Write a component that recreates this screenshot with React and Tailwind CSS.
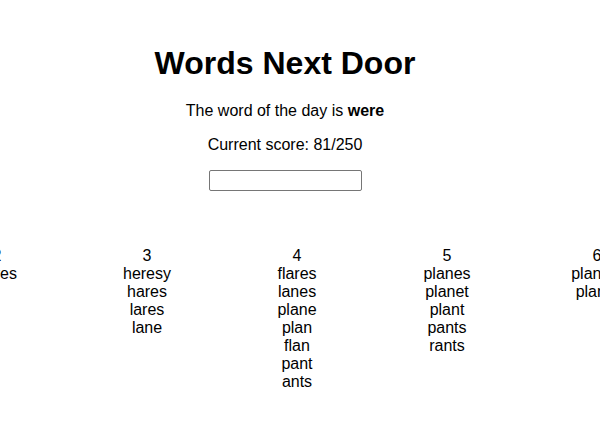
const columns = [
  { n: 2, words: ['heres'] },
  { n: 3, words: ['heresy', 'hares', 'lares', 'lane'] },
  { n: 4, words: ['flares', 'lanes', 'plane', 'plan', 'flan', 'pant', 'ants'] },
  { n: 5, words: ['planes', 'planet', 'plant', 'pants', 'rants'] },
  { n: 6, words: ['planets', 'plants'] },
]

function WordColumn({ n, words }) {
  return (
    <div className="w-[150px] shrink-0 flex flex-col items-center text-center">
      <div>{n}</div>
      {words.map((w) => (
        <div key={w}>{w}</div>
      ))}
    </div>
  )
}

export default function App() {
  return (
    <div className="min-h-[444px] overflow-hidden bg-white text-black text-[16px] leading-[normal] font-['Liberation_Sans',Arial,Helvetica,sans-serif]">
      <div className="w-[570px] flex flex-col items-center text-center pt-[45px]">
        <h1 className="text-[32px] font-bold leading-[normal]">Words Next Door</h1>
        <p className="mt-[20px]">
          The word of the day is <b>were</b>
        </p>
        <p className="mt-[16px]">Current score: 81/250</p>
        <input
          type="text"
          className="mt-[16px] w-[153px] h-[21px] border border-[#767676] rounded-[2px] bg-white px-1 text-[13px] outline-none"
        />
      </div>
      <div className="flex mt-[56px] -ml-[78px]">
        {columns.map((c) => (
          <WordColumn key={c.n} n={c.n} words={c.words} />
        ))}
      </div>
    </div>
  )
}
